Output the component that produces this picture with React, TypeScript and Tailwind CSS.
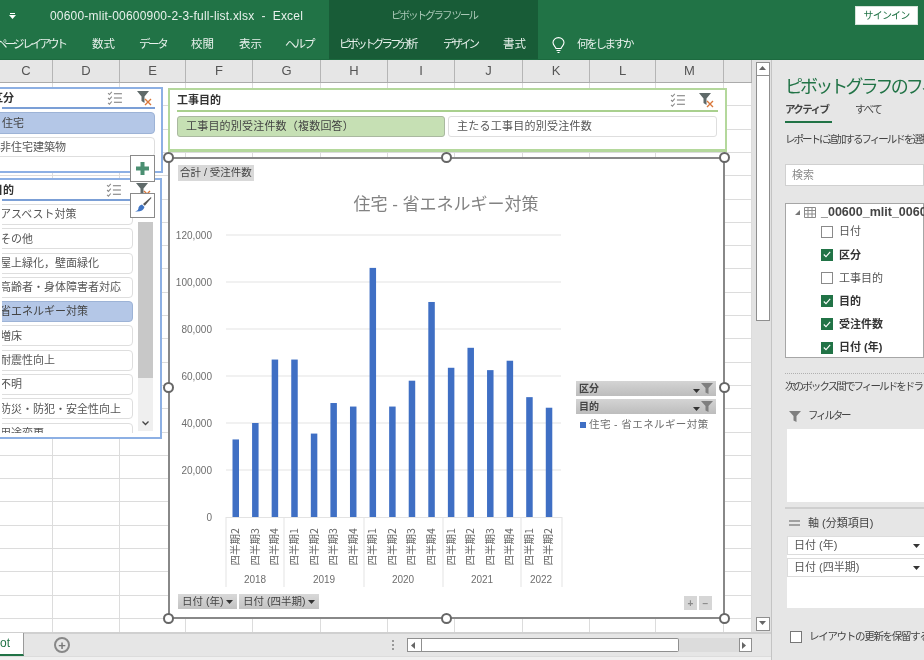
import React from "react";

const quarters = [
  ["四半期2", 33000], ["四半期3", 40000], ["四半期4", 67000],
  ["四半期1", 67000], ["四半期2", 35500], ["四半期3", 48500], ["四半期4", 47000],
  ["四半期1", 106000], ["四半期2", 47000], ["四半期3", 58000], ["四半期4", 91500],
  ["四半期1", 63500], ["四半期2", 72000], ["四半期3", 62500], ["四半期4", 66500],
  ["四半期1", 51000], ["四半期2", 46500],
] as const;

const years = [
  { label: "2018", x: 255 },
  { label: "2019", x: 324 },
  { label: "2020", x: 403 },
  { label: "2021", x: 482 },
  { label: "2022", x: 541 },
];

const columns = [
  { name: "C", w: 53 },
  { name: "D", w: 67 },
  { name: "E", w: 66 },
  { name: "F", w: 67 },
  { name: "G", w: 68 },
  { name: "H", w: 67 },
  { name: "I", w: 67 },
  { name: "J", w: 68 },
  { name: "K", w: 67 },
  { name: "L", w: 66 },
  { name: "M", w: 68 },
  { name: "", w: 28 },
];

const purposes = [
  "アスベスト対策",
  "その他",
  "屋上緑化，壁面緑化",
  "高齢者・身体障害者対応",
  "省エネルギー対策",
  "増床",
  "耐震性向上",
  "不明",
  "防災・防犯・安全性向上",
  "用途変更",
];

const fields = [
  { label: "日付", on: false },
  { label: "区分", on: true },
  { label: "工事目的", on: false },
  { label: "目的", on: true },
  { label: "受注件数", on: true },
  { label: "日付 (年)", on: true },
];

const MultiSelectIcon = () => (
  <svg width="16" height="14" viewBox="0 0 15 13" fill="none" stroke="#8a8a8a" strokeWidth="1">
    <path d="M1 2l1.3 1.3L4.5.8M1 6.5l1.3 1.3L4.5 5.3M1 11l1.3 1.3L4.5 9.8" />
    <path d="M6.5 2.5H14M6.5 6.5H14M6.5 10.5H14" stroke="#777" />
  </svg>
);

const ClearFilterIcon = () => (
  <svg width="16" height="15" viewBox="0 0 16 15">
    <path d="M0 0h12L7.5 5.5V12L4.5 10V5.5z" fill="#5f6a6a" />
    <path d="M8 8l6 6M14 8l-6 6" stroke="#d9773a" strokeWidth="1.4" />
  </svg>
);

const Funnel = ({ color = "#7f7f7f" }: { color?: string }) => (
  <svg className="shrink-0" width="12" height="11" viewBox="0 0 12 11">
    <path d="M0 0h12L7.5 5v6l-3-1.5V5z" fill={color} />
  </svg>
);

const Caret = ({ color = "#333" }: { color?: string }) => (
  <svg width="7" height="4" viewBox="0 0 7 4">
    <path d="M0 0h7L3.5 4z" fill={color} />
  </svg>
);

const Check = ({ on }: { on: boolean }) =>
  on ? (
    <span className="w-[12px] h-[12px] bg-[#217346] flex items-center justify-center shrink-0">
      <svg width="8" height="7" viewBox="0 0 8 7" fill="none" stroke="#fff" strokeWidth="1.1">
        <path d="M.8 3.5l2.2 2.2L7.2.8" />
      </svg>
    </span>
  ) : (
    <span className="w-[12px] h-[12px] bg-white border border-[#8a8a8a] shrink-0" />
  );

const Handle = ({ className }: { className: string }) => (
  <span className={`absolute w-[11px] h-[11px] rounded-full bg-white border-2 border-[#666] ${className}`} />
);

const ScrollBtn = ({ dir, className = "" }: { dir: "up" | "down" | "left" | "right"; className?: string }) => {
  const d = { up: "M0 4L3.5 0 7 4z", down: "M0 0h7L3.5 4z", left: "M4 0v7L0 3.5z", right: "M0 0v7l4-3.5z" }[dir];
  return (
    <span className={`flex items-center justify-center bg-white border border-[#8f8f8f] shrink-0 ${className}`}>
      <svg width="7" height="7" viewBox="0 0 7 7">
        <path d={d} fill="#666" />
      </svg>
    </span>
  );
};

export default function App() {
  return (
    <div className="relative w-[924px] h-[660px] overflow-hidden flex flex-col bg-white font-['Liberation_Sans','Noto_Sans_CJK_JP',sans-serif] text-[#444] blur-[0.5px]">
      {/* title bar + ribbon tabs */}
      <div className="flex h-[60px] shrink-0 bg-[#217346] text-[#e8f1ec] border-b border-[#1c6a3f]">
        <div className="w-[329px] overflow-hidden">
          <div className="flex items-center h-[31px] pt-[1px]">
            <span className="ml-[9px] w-[7px] flex flex-col items-center gap-[1px]">
              <span className="w-[5px] h-px bg-white" />
              <Caret color="#fff" />
            </span>
            <span className="ml-[34px] text-[12px] tracking-[0.2px] whitespace-pre">00600-mlit-00600900-2-3-full-list.xlsx  -  Excel</span>
          </div>
          <div className="flex items-center h-[28px] text-[11.5px] whitespace-pre">
            <span className="ml-[-4px] w-[96px] tracking-[-2.9px]">ページ  レイアウト</span>
            <span className="w-[47px]">数式</span>
            <span className="w-[52px] tracking-[-2.4px]">データ</span>
            <span className="w-[48px]">校閲</span>
            <span className="w-[46px]">表示</span>
            <span className="tracking-[-2px]">ヘルプ</span>
          </div>
        </div>
        <div className="w-[209px] bg-[#185c37]">
          <div className="h-[31px] flex items-center pl-[62px] text-[10.5px] text-[#a9c8b6] tracking-[-2px] whitespace-nowrap">ピボットグラフ ツール</div>
          <div className="flex items-center h-[28px] pl-[10px] text-[11.5px] whitespace-nowrap">
            <span className="w-[104px] tracking-[-3px]">ピボットグラフ分析</span>
            <span className="w-[60px] tracking-[-3px]">デザイン</span>
            <span>書式</span>
          </div>
        </div>
        <div className="flex-1">
          <div className="h-[31px] flex items-center justify-end pr-[6px]">
            <span className="w-[63px] h-[19px] flex items-center justify-center bg-white text-[#217346] text-[10px] tracking-[-0.8px] border border-[#d5e3da]">
              サインイン
            </span>
          </div>
          <div className="flex items-center h-[28px] pl-[14px]">
            <svg width="13" height="17" viewBox="0 0 13 17" fill="none" stroke="#fff" strokeWidth="1.1">
              <path d="M4 11.5C3.5 9.5 1 8.5 1 5.6A5.5 5 0 0 1 12 5.6c0 2.9-2.5 3.9-3 5.9z" />
              <path d="M4.5 13.5h4M5.5 15.5h2" />
            </svg>
            <span className="ml-[12px] text-[11.5px] tracking-[-2.3px]">何をしますか</span>
          </div>
        </div>
      </div>

      {/* body */}
      <div className="flex flex-1 min-h-0">
        <div className="w-[772px] shrink-0 flex flex-col border-r border-[#c4c4c4] bg-[#e6e6e6]">
          <div className="flex flex-1 min-h-0">
            <div className="w-[752px] flex flex-col shrink-0">
              <div className="flex h-[23px] shrink-0 bg-[#e6e6e6] border-b border-[#ababab]">
                {columns.map((c) => (
                  <div
                    key={c.name || "blank"}
                    style={{ width: c.w }}
                    className="shrink-0 flex items-center justify-center border-r border-[#b5b5b5] text-[13px] text-[#555]"
                  >
                    {c.name}
                  </div>
                ))}
              </div>
              <div className="relative flex flex-1 bg-white bg-[repeating-linear-gradient(to_bottom,transparent_0,transparent_22.3px,#dcdcdc_22.3px,#dcdcdc_23.3px)]">
                {columns.map((c) => (
                  <div key={c.name || "blank"} style={{ width: c.w }} className="shrink-0 border-r border-[#dcdcdc]" />
                ))}

                {/* 区分 slicer */}
                <div className="absolute left-[-8px] top-[4px] w-[171px] h-[86px] bg-white border-2 border-[#8db0e4] pl-[8px] pr-[6px] overflow-hidden">
                  <div className="flex items-center h-[20px] border-b-2 border-[#7b9fd6] text-[11px] font-bold text-[#333]">
                    <span className="-ml-[10px]">区分</span>
                    <span className="ml-auto mr-[14px]"><MultiSelectIcon /></span>
                    <span className="mr-[2px]"><ClearFilterIcon /></span>
                  </div>
                  <div className="mt-[3px] h-[22px] -ml-[8px] rounded-[4px] bg-[#b4c7e7] border border-[#9db3d6] flex items-center pl-[7px] text-[11px] text-[#444]">
                    住宅
                  </div>
                  <div className="mt-[3px] h-[20px] -ml-[8px] rounded-[4px] bg-white border border-[#dedede] flex items-center pl-[5px] text-[11px] text-[#555]">
                    非住宅建築物
                  </div>
                </div>

                {/* 目的 slicer */}
                <div className="absolute left-[-8px] top-[95px] w-[170px] h-[261px] bg-white border-2 border-[#8db0e4] pl-[8px] pr-[6px] overflow-hidden">
                  <div className="flex items-center h-[20px] border-b-2 border-[#7b9fd6] text-[11px] font-bold text-[#333] mt-[1px]">
                    <span className="-ml-[10px]">目的</span>
                    <span className="ml-auto mr-[14px]"><MultiSelectIcon /></span>
                    <span className="mr-[2px]"><ClearFilterIcon /></span>
                  </div>
                  <div className="flex mt-[3px] h-[229px] overflow-hidden">
                    <div className="w-[139px] -ml-[8px] flex flex-col gap-[3.3px] shrink-0">
                      {purposes.map((p) => (
                        <div
                          key={p}
                          className={`h-[21px] shrink-0 rounded-[4px] border flex items-center pl-[5px] text-[11px] whitespace-nowrap ${
                            p === "省エネルギー対策"
                              ? "bg-[#b4c7e7] border-[#9db3d6] text-[#444]"
                              : "bg-white border-[#dedede] text-[#555]"
                          }`}
                        >
                          {p}
                        </div>
                      ))}
                    </div>
                    <div className="ml-[5px] mt-[18px] w-[15px] h-[209px] bg-[#efefef] relative shrink-0">
                      <div className="w-[15px] h-[156px] bg-[#c8c8c8]" />
                      <svg className="absolute left-[4px] bottom-[5px]" width="7" height="5" viewBox="0 0 7 5" fill="none" stroke="#444" strokeWidth="1.3">
                        <path d="M.5.5l3 3 3-3" />
                      </svg>
                    </div>
                  </div>
                </div>

                {/* chart side buttons */}
                <div className="absolute left-[130px] top-[72px] w-[25px] h-[27px] bg-white border border-[#8a8a8a] flex items-center justify-center">
                  <svg width="15" height="15" viewBox="0 0 15 15">
                    <path d="M5.5 1h4v4.5H14v4H9.5V14h-4V9.5H1v-4h4.5z" fill="#4b8f72" />
                  </svg>
                </div>
                <div className="absolute left-[130px] top-[110px] w-[25px] h-[25px] bg-white border border-[#8a8a8a] flex items-center justify-center">
                  <svg width="19" height="19" viewBox="0 0 19 19">
                    <path d="M18 1L10 8l1.8 1.8L18.4 2z" fill="#555" />
                    <path d="M9 8.5l2.5 2.5c-1 3.5-4 5-9.5 4.5 3-1 3.5-2 3.5-4 .7-1.6 2-2.6 3.5-3z" fill="#3f74c4" />
                  </svg>
                </div>

                {/* 工事目的 slicer */}
                <div className="absolute left-[168px] top-[5px] w-[559px] h-[64px] bg-white border-2 border-[#b4d89c] border-b-[3px] px-[7px]">
                  <div className="flex items-center h-[22px] border-b-2 border-[#a9d08e] text-[11px] font-bold text-[#333]">
                    <span>工事目的</span>
                    <span className="ml-auto mr-[13px]"><MultiSelectIcon /></span>
                    <span className="mr-[3px]"><ClearFilterIcon /></span>
                  </div>
                  <div className="flex gap-[3px] mt-[4px] text-[11px]">
                    <div className="w-[268px] h-[21px] rounded-[3px] bg-[#c6e0b4] border border-[#aab9a0] flex items-center pl-[8px] text-[#444] tracking-[0.2px]">
                      工事目的別受注件数（複数回答）
                    </div>
                    <div className="w-[269px] h-[21px] rounded-[3px] bg-white border border-[#dedede] flex items-center pl-[8px] text-[#555] tracking-[0.25px]">
                      主たる工事目的別受注件数
                    </div>
                  </div>
                </div>

                {/* pivot chart */}
                <div className="absolute left-[168px] top-[74px] w-[557px] h-[462px] bg-white border-2 border-[#888]">
                  <div className="absolute left-[8px] top-[6px] w-[76px] h-[16px] bg-[#d9d9d9] flex items-center justify-center text-[10.5px] text-[#444] whitespace-nowrap">
                    合計 / 受注件数
                  </div>

                  <svg className="absolute left-[-2px] top-[-2px]" width="557" height="462" viewBox="168 157 557 462">
                    {[0, 20000, 40000, 60000, 80000, 100000, 120000].map((v) => {
                      const y = 517 - v * 0.00235;
                      return (
                        <g key={v}>
                          {v > 0 && <line x1="226" x2="561" y1={y} y2={y} stroke="#e3e3e3" />}
                          <text x="212" y={y + 3.5} textAnchor="end" fontSize="10" fill="#6e6e6e" fontFamily="Liberation Sans">
                            {v.toLocaleString("en-US")}
                          </text>
                        </g>
                      );
                    })}
                    <line x1="226" x2="562" y1="517.5" y2="517.5" stroke="#e3e3e3" />
                    {[226, 284, 364, 443, 521, 562].map((x) => (
                      <line key={x} x1={x} x2={x} y1="517" y2="587" stroke="#e3e3e3" />
                    ))}
                    {quarters.map(([q, v], i) => {
                      const cx = 235.7 + i * 19.58;
                      const h = v * 0.00235;
                      return (
                        <g key={i}>
                          <rect x={cx - 3.2} y={517 - h} width="6.5" height={h} fill="#3f6fc4" />
                          <text
                            transform={`translate(${cx + 3.5} 565.5) rotate(-90)`}
                            fontSize="10.5"
                            fill="#666"
                            fontFamily="Noto Sans CJK JP"
                          >
                            {q}
                          </text>
                        </g>
                      );
                    })}
                    {years.map((y) => (
                      <text key={y.label} x={y.x} y="583" textAnchor="middle" fontSize="10" fill="#6e6e6e" fontFamily="Liberation Sans">
                        {y.label}
                      </text>
                    ))}
                    <text x="446" y="210" textAnchor="middle" fontSize="17" fill="#828282" fontFamily="Liberation Sans, Noto Sans CJK JP">
                      住宅 - 省エネルギー対策
                    </text>
                  </svg>

                  {/* legend fields */}
                  <div className="absolute left-[406px] top-[222px] w-[140px] flex flex-col gap-[3px]">
                    {["区分", "目的"].map((f) => (
                      <div key={f} className="h-[15px] px-[3px] bg-gradient-to-b from-[#d4d4d4] to-[#bdbdbd] flex items-center text-[10px] font-bold text-[#444]">
                        {f}
                        <span className="ml-auto mr-[1px] mt-[4px]"><Caret /></span>
                        <Funnel />
                      </div>
                    ))}
                    <div className="flex items-center pl-[4px] text-[10.5px] text-[#6e6e6e] whitespace-nowrap tracking-[0.4px]">
                      <span className="w-[6px] h-[6px] bg-[#3f6fc4] mr-[3px]" />
                      住宅 - 省エネルギー対策
                    </div>
                  </div>

                  {/* axis fields */}
                  <div className="absolute left-[8px] top-[435px] flex gap-[2px]">
                    {[{ t: "日付 (年)", w: 59 }, { t: "日付 (四半期)", w: 80 }].map((f) => (
                      <div key={f.t} style={{ width: f.w }} className="h-[15px] bg-gradient-to-b from-[#d9d9d9] to-[#c2c2c2] flex items-center pl-[4px] text-[10.5px] text-[#444] whitespace-nowrap">
                        {f.t}
                        <span className="ml-auto mr-[4px]"><Caret /></span>
                      </div>
                    ))}
                  </div>
                  <div className="absolute left-[514px] top-[437px] flex gap-[2px]">
                    {["+", "−"].map((s) => (
                      <span key={s} className="w-[13px] h-[14px] bg-[#d6d6d6] flex items-center justify-center text-[10px] font-bold text-[#8a8a8a]">
                        {s}
                      </span>
                    ))}
                  </div>
                </div>

                {/* selection handles */}
                <Handle className="left-[163px] top-[69px]" />
                <Handle className="left-[441px] top-[69px]" />
                <Handle className="left-[719px] top-[69px]" />
                <Handle className="left-[163px] top-[299px]" />
                <Handle className="left-[719px] top-[299px]" />
                <Handle className="left-[163px] top-[530px]" />
                <Handle className="left-[441px] top-[530px]" />
                <Handle className="left-[719px] top-[530px]" />
              </div>
            </div>

            {/* vertical scrollbar */}
            <div className="w-[19px] shrink-0 flex flex-col items-center bg-[#e2e2e2] pt-[2px] pl-[2px] pb-[1px]">
              <ScrollBtn dir="up" className="w-[14px] h-[14px]" />
              <div className="flex-1 w-[14px]">
                <div className="h-[245px] bg-white border border-[#8f8f8f] border-t-0" />
              </div>
              <ScrollBtn dir="down" className="w-[14px] h-[14px]" />
            </div>
          </div>

          {/* sheet tabs */}
          <div className="h-[24px] shrink-0 flex items-center border-t-2 border-[#d0d0d0] bg-[#e6e6e6]">
            <div className="w-[24px] h-[23px] -mt-[2px] bg-white border-r border-[#9a9a9a] border-b-2 border-b-[#217346] text-[#217346] text-[12px] flex items-center shrink-0">
              ot
            </div>
            <span className="ml-[30px] w-[16px] h-[16px] rounded-full border-2 border-[#888] flex items-center justify-center text-[13px] leading-none font-bold text-[#777] shrink-0">
              +
            </span>
            <span className="ml-[322px] flex flex-col gap-[2px] shrink-0">
              <span className="w-[2px] h-[2px] bg-[#999]" />
              <span className="w-[2px] h-[2px] bg-[#999]" />
              <span className="w-[2px] h-[2px] bg-[#999]" />
            </span>
            <div className="ml-[13px] w-[345px] h-[14px] flex shrink-0">
              <ScrollBtn dir="left" className="w-[15px] h-[14px]" />
              <div className="w-[257px] h-[14px] bg-white border border-[#8f8f8f] border-l-0 rounded-r-[2px]" />
              <div className="flex-1 bg-[#dcdcdc]" />
              <ScrollBtn dir="right" className="w-[13px] h-[14px]" />
            </div>
          </div>
          <div className="h-[4px] shrink-0 bg-[#f0f0f0] border-t border-[#dcdcdc]" />
        </div>

        {/* field list pane */}
        <div className="flex-1 min-w-0 bg-[#e6e6e6] pl-[13px] overflow-hidden text-[#444] whitespace-nowrap">
          <div className="mt-[14px] text-[18px] leading-[26px] text-[#217346] tracking-[-2.9px]">ピボットグラフのフィールド</div>
          <div className="mt-[0px] flex text-[10.5px] h-[21px] items-center pb-[1px]">
            <span className="font-bold tracking-[-1.6px] w-[70px]">アクティブ</span>
            <span className="tracking-[-1.3px]">すべて</span>
          </div>
          <div className="w-[47px] h-[2px] bg-[#217346]" />
          <div className="mt-[9px] h-[15px] text-[10.5px] leading-[15px] tracking-[-2px]">レポートに追加するフィールドを選択してください:</div>
          <div className="mt-[17px] h-[22px] bg-white border border-[#d0d0d0] flex items-center pl-[6px] text-[11px] text-[#8a8a8a]">検索</div>
          <div className="mt-[17px] h-[155px] bg-white border border-[#a6a6a6] relative">
            <div className="flex items-center h-[16px] pl-[9px] font-bold text-[12.5px] text-[#444]">
              <svg className="shrink-0" width="5" height="5" viewBox="0 0 5 5"><path d="M5 0v5H0z" fill="#777" /></svg>
              <svg className="ml-[4px] shrink-0" width="12" height="11" viewBox="0 0 12 11" fill="#fff" stroke="#8a8a8a" strokeWidth="1">
                <path d="M.5.5h11v10H.5zM.5 3.5h11M.5 7h11M4 .5v10M8 .5v10" />
              </svg>
              <span className="ml-[5px]">_00600_mlit_00600900</span>
            </div>
            <div className="flex flex-col">
              {fields.map((f) => (
                <div key={f.label} className={`flex items-center h-[23.2px] pl-[35px] gap-[6px] text-[11px] ${f.on ? "font-bold text-[#333]" : "text-[#555]"}`}>
                  <Check on={f.on} />
                  {f.label}
                </div>
              ))}
            </div>
          </div>
          <div className="mt-[15px] border-t border-dotted border-[#b0b0b0]" />
          <div className="mt-[4px] h-[16px] text-[10.5px] leading-[16px] tracking-[-1.9px]">次のボックス間でフィールドをドラッグしてください:</div>
          <div className="mt-[15px] h-[14px] flex items-center pl-[4px] gap-[7px] text-[10.5px] tracking-[-2.2px]">
            <Funnel />
            フィルター
          </div>
          <div className="mt-[6px] ml-[2px] h-[73px] bg-white" />
          <div className="mt-[5px] border-t-2 border-[#cfcfcf]" />
          <div className="mt-[6px] h-[16px] flex items-center pl-[4px] gap-[8px] text-[11px]">
            <span className="flex flex-col gap-[2px] w-[11px]">
              <span className="h-[2px] bg-[#a0a0a0]" />
              <span className="h-[2px] bg-[#a0a0a0]" />
            </span>
            軸 (分類項目)
          </div>
          <div className="mt-[5px] ml-[2px] h-[72px] bg-white flex flex-col gap-[3px] text-[11px]">
            {["日付 (年)", "日付 (四半期)"].map((a) => (
              <div key={a} className="h-[19px] flex items-center pl-[6px] border border-[#dcdcdc] border-r-0 text-[#555] bg-white">
                {a}
                <span className="ml-auto mr-[4px]"><Caret /></span>
              </div>
            ))}
          </div>
          <div className="mt-[21px] flex items-center pl-[5px] gap-[7px] text-[10.5px] tracking-[-1.3px]">
            <span className="w-[12px] h-[12px] bg-white border border-[#777] shrink-0" />
            レイアウトの更新を保留する
          </div>
        </div>
      </div>
    </div>
  );
}
